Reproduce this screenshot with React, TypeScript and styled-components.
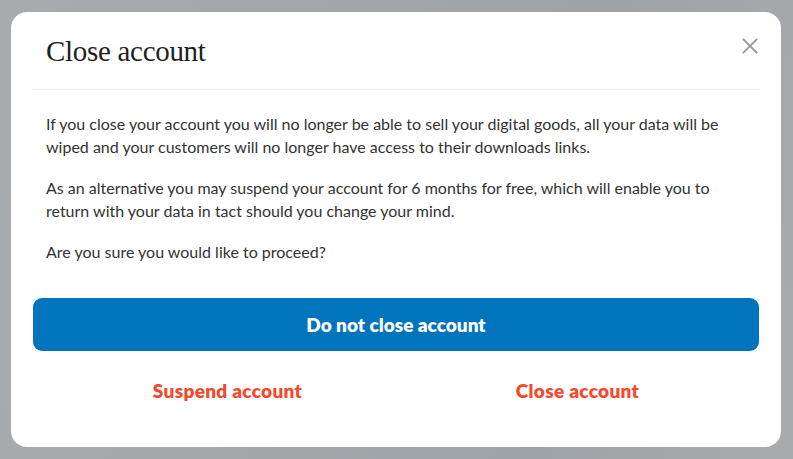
import React from "react";
import styled, { createGlobalStyle } from "styled-components";

const Global = createGlobalStyle`
  html, body { margin: 0; padding: 0; }
  body {
    width: 793px;
    height: 459px;
    overflow: hidden;
    background: linear-gradient(100deg, #a9abad 0%, #a4a8ab 30%, #9ea3a7 70%, #a9abad 100%);
    font-family: Lato, "Noto Sans", sans-serif;
  }
`;

const Backdrop = styled.div`
  box-sizing: border-box;
  width: 793px;
  height: 459px;
  padding: 12px 12px 12px 11px;
  display: flex;
`;

const Modal = styled.div`
  box-sizing: border-box;
  width: 770px;
  height: 435px;
  background: #ffffff;
  border-radius: 16px;
  padding: 0 22px;
  display: flex;
  flex-direction: column;
`;

const Header = styled.div`
  display: flex;
  align-items: flex-start;
  justify-content: space-between;
  padding: 22px 0 0 13px;
  height: 55px;
  border-bottom: 1px solid #ececec;
`;

const Title = styled.h2`
  margin: 0;
  font-family: "Liberation Serif", "DejaVu Serif", serif;
  font-weight: 400;
  font-size: 29px;
  letter-spacing: -0.3px;
  color: #1f1f1f;
  line-height: 34px;
`;

const CloseBtn = styled.button`
  border: 0;
  background: none;
  padding: 0;
  margin: 4px 1px 0 0;
  width: 16px;
  height: 16px;
  display: flex;
  cursor: pointer;
`;

const Body = styled.div`
  padding: 22px 13px 0;
  display: flex;
  flex-direction: column;
  gap: 18px;
`;

const Para = styled.p`
  margin: 0;
  font-size: 16px;
  line-height: 23px;
  letter-spacing: 0px;
  color: #333333;
`;

const Primary = styled.button`
  margin-top: 35px;
  height: 53px;
  border: 0;
  border-radius: 9px;
  background: #0074bd;
  color: #ffffff;
  font-family: Lato, sans-serif;
  font-weight: 800;
  font-size: 19px;
  letter-spacing: 0px;
  cursor: pointer;
`;

const Actions = styled.div`
  display: grid;
  grid-template-columns: 1fr 1fr;
  height: 78px;
  align-items: center;
`;

const LinkBtn = styled.button<{ $shift?: number }>`
  border: 0;
  background: none;
  color: #f4492c;
  font-family: Lato, sans-serif;
  font-weight: 800;
  font-size: 19px;
  letter-spacing: 0.3px;
  cursor: pointer;
  padding: 0 0 0 ${(p) => p.$shift ?? 0}px;
`;

export default function App() {
  return (
    <>
      <Global />
      <Backdrop>
        <Modal>
          <Header>
            <Title>Close account</Title>
            <CloseBtn aria-label="Close">
              <svg width="16" height="16" viewBox="0 0 16 16">
                <path d="M1.5 1.5 L14.5 14.5 M14.5 1.5 L1.5 14.5" stroke="#999999" strokeWidth="1.8" strokeLinecap="square" />
              </svg>
            </CloseBtn>
          </Header>
          <Body>
            <Para>
              If you close your account you will no longer be able to sell your digital goods, all your data will be
              wiped and your customers will no longer have access to their downloads links.
            </Para>
            <Para>
              As an alternative you may suspend your account for 6 months for free, which will enable you to
              <br />
              return with your data in tact should you change your mind.
            </Para>
            <Para>Are you sure you would like to proceed?</Para>
          </Body>
          <Primary>Do not close account</Primary>
          <Actions>
            <LinkBtn $shift={26}>Suspend account</LinkBtn>
            <LinkBtn>Close account</LinkBtn>
          </Actions>
        </Modal>
      </Backdrop>
    </>
  );
}
